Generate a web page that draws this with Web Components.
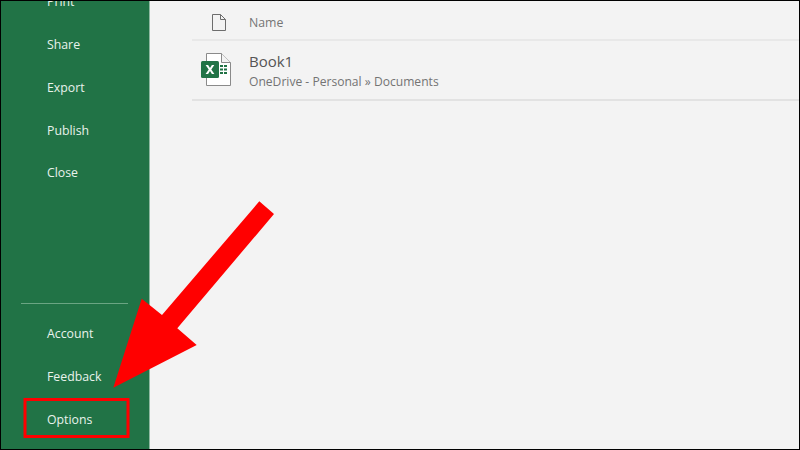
<!DOCTYPE html>
<html lang="en"><head><meta charset="utf-8"><title>Excel</title>
<style>
html,body{margin:0;padding:0;width:800px;height:450px;overflow:hidden;background:#000}
body{font-family:"Open Sans","Noto Sans","Liberation Sans",sans-serif}
</style></head><body>
<xl-app>
  <xl-sidebar>
    <xl-nav-item>Print</xl-nav-item>
    <xl-nav-item>Share</xl-nav-item>
    <xl-nav-item>Export</xl-nav-item>
    <xl-nav-item>Publish</xl-nav-item>
    <xl-nav-item>Close</xl-nav-item>
    <xl-nav-item slot="bottom">Account</xl-nav-item>
    <xl-nav-item slot="bottom">Feedback</xl-nav-item>
    <xl-nav-item slot="bottom">Options</xl-nav-item>
  </xl-sidebar>
  <xl-files>
    <xl-file-row name="Book1" path="OneDrive - Personal » Documents"></xl-file-row>
  </xl-files>
  <xl-annotation></xl-annotation>
</xl-app>
<script>
function def(name,html,init){
  customElements.define(name,class extends HTMLElement{
    constructor(){super();this.attachShadow({mode:"open"}).innerHTML=html;}
    connectedCallback(){if(init)init(this);}
  });
}
def("xl-app",`<style>
:host{display:flex;position:relative;box-sizing:border-box;width:798px;height:448px;margin:1px 0 0 1px;background:#f3f3f3;overflow:hidden}
</style><slot></slot>`);
def("xl-sidebar",`<style>
:host{display:flex;flex-direction:column;box-sizing:border-box;width:149px;flex:none;background:#217346;border-right:1px solid #8fb9a2;overflow:hidden}
.top{display:flex;flex-direction:column;margin-top:-20.9px}
.spacer{flex:1}
.rule{height:1px;background:#6ba583;margin:0 21px 0 20px}
.bottom{display:flex;flex-direction:column;padding:8px 0 8.1px}
</style>
<div class="top"><slot></slot></div><div class="spacer"></div><div class="rule"></div>
<div class="bottom"><slot name="bottom"></slot></div>`);
def("xl-nav-item",`<style>
:host{display:flex;align-items:center;height:42.85px;padding-left:46px;font-size:12.3px;color:#e9f2ec;flex:none}
</style><slot></slot>`);
def("xl-files",`<style>
:host{display:flex;flex-direction:column;flex:1;padding-left:42px;color:#6a6a6a;min-width:0}
.head{display:flex;align-items:center;box-sizing:border-box;height:40px;padding-top:5px;border-bottom:2px solid #e8e8e8;font-size:12.3px;color:#757575}
.ico{width:57px;flex:none;display:flex;justify-content:center;padding-right:4px;box-sizing:border-box}
svg{display:block}
</style>
<div class="head"><div class="ico"><svg width="14" height="17" viewBox="0 0 14 17" fill="none" stroke="#6d6d6d" stroke-width="1"><path d="M.5.5H8.5L13.5 5.5V16.5H.5Z M8.5.5V5.5H13.5"/></svg></div><span>Name</span></div>
<slot></slot>`);
def("xl-file-row",`<style>
:host{display:flex;align-items:center;box-sizing:border-box;height:60px;border-bottom:2px solid #e2e2e2}
.ico{width:57px;flex:none;display:flex;padding-left:9px;box-sizing:border-box}
.t{display:flex;flex-direction:column;gap:2px;padding-top:1px}
.n{font-size:15px;line-height:20px;color:#555}
.p{font-size:12.1px;line-height:17px;color:#747474}
svg{display:block}
</style>
<div class="ico"><svg width="30" height="34" viewBox="0 0 30 34">
<path d="M5.5.5H20.5L29.5 9.5V32.5H5.5Z" fill="#fff" stroke="#8a8a8a"/>
<path d="M20.5.5V9.5H29.5" fill="#f3f3f3" stroke="#8a8a8a"/>
<rect x="0" y="8" width="18" height="17" rx="1.5" fill="#217346"/>
<path d="M4.6 12H7.1L9 15.1 10.9 12H13.3L10.3 16.5 13.4 21H10.9L9 17.9 7.1 21H4.6L7.7 16.5Z" fill="#fff"/>
<path d="M19 12h3v2h-3zM23 12h3v2h-3zM19 15.5h3v2h-3zM23 15.5h3v2h-3zM19 19h3v2h-3zM23 19h3v2h-3z" fill="#217346"/>
</svg></div>
<div class="t"><span class="n"></span><span class="p"></span></div>`,el=>{
  el.shadowRoot.querySelector(".n").textContent=el.getAttribute("name");
  el.shadowRoot.querySelector(".p").textContent=el.getAttribute("path");
});
def("xl-annotation",`<style>
:host{position:absolute;left:-1px;top:-1px;width:800px;height:450px;pointer-events:none}
svg{display:block}
</style>
<svg width="800" height="450" viewBox="0 0 800 450">
<polygon fill="#f00" points="259.3,201.3 274,214 177.3,328.3 196.7,345 113.3,387.7 141.7,298.7 162,315"/>
<rect x="25" y="399.5" width="103" height="37" fill="none" stroke="#f00" stroke-width="3"/>
</svg>`);
</script>
</body></html>
